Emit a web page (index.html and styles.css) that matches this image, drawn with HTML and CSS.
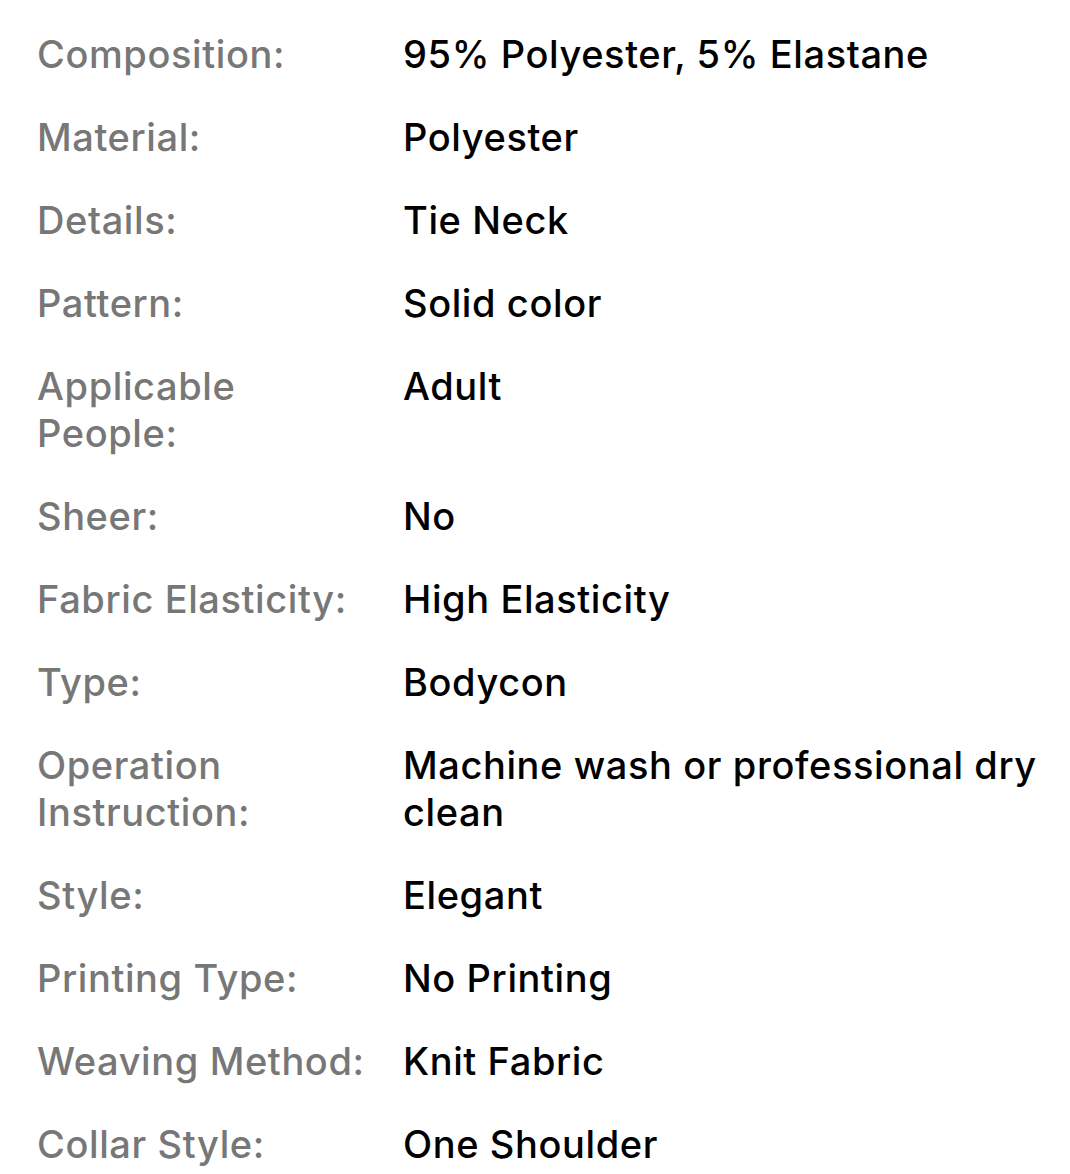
FILE: index.html
```html
<!DOCTYPE html>
<html>
<head>
<meta charset="utf-8">
<link rel="stylesheet" href="styles.css">
</head>
<body>
<dl class="specs">
  <dt>Composition:</dt><dd>95% Polyester, 5% Elastane</dd>
  <dt>Material:</dt><dd>Polyester</dd>
  <dt>Details:</dt><dd>Tie Neck</dd>
  <dt>Pattern:</dt><dd>Solid color</dd>
  <dt>Applicable People:</dt><dd>Adult</dd>
  <dt>Sheer:</dt><dd>No</dd>
  <dt>Fabric Elasticity:</dt><dd>High Elasticity</dd>
  <dt>Type:</dt><dd>Bodycon</dd>
  <dt>Operation Instruction:</dt><dd>Machine wash or professional dry clean</dd>
  <dt>Style:</dt><dd>Elegant</dd>
  <dt>Printing Type:</dt><dd>No Printing</dd>
  <dt>Weaving Method:</dt><dd>Knit Fabric</dd>
  <dt>Collar Style:</dt><dd>One Shoulder</dd>
</dl>
</body>
</html>
```

FILE: styles.css
```css
html, body {
  margin: 0;
  padding: 0;
  background: #ffffff;
}
body {
  font-family: Inter, "Noto Sans", Roboto, sans-serif;
  -webkit-font-smoothing: antialiased;
}
.specs {
  margin: 0;
  padding: 31px 30px 0 37px;
  display: grid;
  grid-template-columns: 338px 1fr;
  column-gap: 28px;
  row-gap: 36px;
  font-size: 38px;
  line-height: 47px;
  font-weight: 500;
  letter-spacing: 0.6px;
}
.specs dt {
  color: #777777;
  margin: 0;
}
.specs dd {
  color: #000000;
  margin: 0;
}
```
